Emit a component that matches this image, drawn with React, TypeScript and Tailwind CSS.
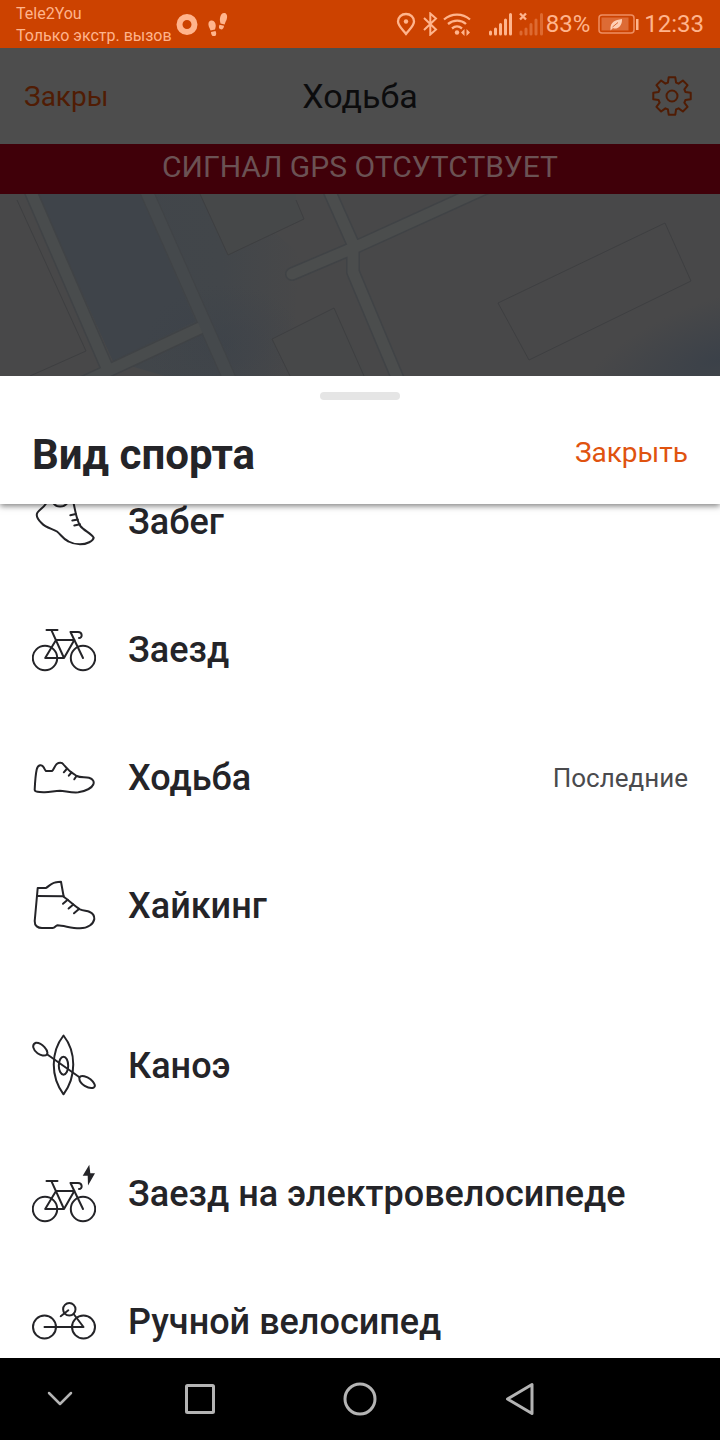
import React from "react";

const stroke = {
  fill: "none",
  stroke: "currentColor",
  strokeWidth: 2,
  strokeLinecap: "round" as const,
  strokeLinejoin: "round" as const,
};

const RunIcon = () => (
  <svg viewBox="0 0 64 64" className="w-16 h-16" {...stroke}>
    <path d="M16 8C16 15 9 18 5.500 22.500C3.500 25.500 6.500 30 9.500 33C14 38 20 38.500 25 41.500C29 44.500 31 49 36.500 51.500C41 54 44 54.300 48 54.300C55 54.300 61 51 61.700 47.700C59 43.500 52 40.500 48.300 36C44 29 43.500 21 41.300 12" />
    <path d="M20 10.500C23 18.500 33 18.500 37 10.500" />
    <path d="M38.300 25.300L43.800 24M40.300 30.500L45.800 29.500M42.300 35.500L48 34.300" />
  </svg>
);

const BikeParts = () => (
  <>
    <circle cx="13" cy="40" r="12.200" />
    <circle cx="51" cy="40" r="12.200" />
    <path d="M14.500 12H25.500M19.500 12.300L32 40M24 22H42.300M32 40H13.200L24 22M32 40L42.300 22" />
    <path d="M51 40L38.500 14H46C50.700 14 50.700 20 47 20" />
  </>
);

const BikeIcon = () => (
  <svg viewBox="0 0 64 64" className="w-16 h-16" {...stroke}>
    <BikeParts />
  </svg>
);

const WalkIcon = () => (
  <svg viewBox="0 0 64 64" className="w-16 h-16" {...stroke}>
    <path d="M2.700 43.500C3 37 3.500 29 4.700 23.500C6 18.500 10 18 11.800 21.500C12.700 23.300 13 24.500 14 25H20C21.500 24.500 22.500 20 24.700 18C27 16.300 30 16.300 31.500 18.500C35 23 39.500 27 44.700 30C48.500 32 53 30.700 57 31.700C61 33 62.500 35.500 61.300 38.500C59.500 42.500 53.500 45 46.300 46.300C39 47 33 44.800 28 44.700C22 44.800 17 46.800 11.300 46.300C7.500 46.200 2.500 46 2.700 43.500Z" />
    <path d="M34.700 23L31.800 26.300M39.500 26.500L36.800 29.700M44.500 30L42.300 33.300" />
  </svg>
);

const HikeIcon = () => (
  <svg viewBox="0 0 64 64" className="w-16 h-16" {...stroke}>
    <path d="M5.700 14H14C17 12 20 9 23 8.500C25 8 27 7.700 29 7.700L31.700 22.700C37 26.500 42.500 32 48 35.300C51.500 37 55 36.500 57.800 38C61 39.500 62.500 42 62.300 45C61.500 50 56 54.300 48 54.300C40 54.500 32 51.500 25.500 51.300C23.500 51.500 23.300 53.700 20.500 54H10C6 54 2.500 52 2.700 47Z" />
    <path d="M5 22L31.700 22.300M35.700 25.700L31 29.800M41.300 30.500L36.600 34.500M46.700 35.300L42 39.300" />
  </svg>
);

const CanoeIcon = () => (
  <svg viewBox="0 0 64 64" className="w-16 h-16" {...stroke}>
    <path d="M31.500 1.500C44.500 18 44.500 43 31.500 60.300C18.500 43 18.500 18 31.500 1.500Z" />
    <ellipse cx="31.500" cy="31.700" rx="4.700" ry="9" />
    <path d="M15 20.300L47.500 43.200" />
    <path d="M15 20.300C17 17 10 8.500 4 8.800C-1 10.500 1.500 16.500 5.500 19.300C8.500 21.500 13 22.500 15 20.300Z" />
    <path d="M47.500 43.200C49 40.500 55 42.500 58.500 45.300C61 47.500 64.500 51.500 62 53.300C58 56 46 50 47.500 43.200Z" />
  </svg>
);

const EBikeIcon = () => (
  <svg viewBox="0 0 64 64" className="w-16 h-16" {...stroke}>
    <g transform="translate(0 7)">
      <BikeParts />
    </g>
    <path
      d="M57.300 2.700L50.700 13.700H55.700L56 23.500L63 11.300H58.300Z"
      fill="currentColor"
      stroke="none"
    />
  </svg>
);

const HandBikeIcon = () => (
  <svg viewBox="0 0 64 64" className="w-16 h-16" {...stroke}>
    <circle cx="12.500" cy="37" r="11.500" />
    <circle cx="51.500" cy="37" r="11.500" />
    <circle cx="37.300" cy="19.300" r="6.200" />
    <path d="M12.500 37H51.500L42 24.500M28.700 26.200L36.300 20.300" />
  </svg>
);

// eight teeth, four points each
const gearPoints = Array.from({ length: 8 }, (_, i) =>
  [
    [-17, 14],
    [-10, 19],
    [10, 19],
    [17, 14],
  ]
    .map(([deg, r]) => {
      const a = ((i * 45 + deg) * Math.PI) / 180;
      return `${(20 + r * Math.sin(a)).toFixed(2)},${(20 - r * Math.cos(a)).toFixed(2)}`;
    })
    .join(" ")
).join(" ");

const sports = [
  { name: "Забег", icon: RunIcon },
  { name: "Заезд", icon: BikeIcon },
  { name: "Ходьба", icon: WalkIcon, note: "Последние" },
  { name: "Хайкинг", icon: HikeIcon },
];

const moreSports = [
  { name: "Каноэ", icon: CanoeIcon },
  { name: "Заезд на электровелосипеде", icon: EBikeIcon },
  { name: "Ручной велосипед", icon: HandBikeIcon },
];

const SportRow = ({
  name,
  icon: Icon,
  note,
}: {
  name: string;
  icon: React.ComponentType;
  note?: string;
}) => (
  <li>
    <button className="w-full h-32 px-8 flex items-center gap-8 text-left">
      <Icon />
      <span className="flex-1 text-4xl leading-none font-medium">{name}</span>
      {note && <span className="text-[26px] text-[#4a4a4d]">{note}</span>}
    </button>
  </li>
);

const StatusBar = () => (
  <div className="h-12 shrink-0 px-4 flex items-center justify-between bg-[#cc4200] text-[#ffb48c]">
    <div className="flex items-center gap-1">
      <div className="text-base leading-[22px] pt-0.5">
        <div>Tele2You</div>
        <div>Только экстр. вызов</div>
      </div>
      <svg viewBox="0 0 54 24" className="w-[54px] h-6" fill="currentColor">
        <circle cx="11" cy="12.500" r="7.500" fill="none" stroke="currentColor" strokeWidth="6" />
        <path d="M32.500 13C32 9.500 34 8 36 8.500C39 9 40.300 12 39.500 15.500L39 17.500L34.500 18.500C34 16.500 32.700 15 32.500 13ZM35 20L39.500 19C41 22 40 24 38.300 24.500C36.300 24.700 35 22.500 35 20Z" />
        <path d="M44 6C44.500 2.500 46.500 0.500 48.700 1C51.300 1.500 51.700 5 50.500 8C49.500 10 49 11 48.700 12.500L44.500 11.500C44 9.500 43.700 8 44 6ZM43.500 12.700L48 13.700C48 16 46.500 17.800 44.700 17.300C42.800 16.800 42.500 15 43.500 12.700Z" />
      </svg>
    </div>
    <div className="flex items-center text-2xl">
      <svg viewBox="0 0 150 24" className="w-[150px] h-6" fill="none" stroke="currentColor" strokeWidth="2.300">
        <path d="M10 22C6 17 2 13.500 2 9.500C2 5 5.500 2 10 2C14.500 2 18 5 18 9.500C18 13.500 14 17 10 22Z" />
        <circle cx="10" cy="9.500" r="2.200" fill="currentColor" stroke="none" />
        <path d="M28 6L40 17.500L34.300 22.500V1.500L40 6.500L28 18" strokeWidth="2" />
        <path d="M48 7.500C55.500 1 66.500 1 74 7.500M52 12C57.500 7.500 65 7.500 70 12M56 16.500C59 14 63 14 66 16.500" />
        <circle cx="61" cy="20.500" r="2.200" fill="currentColor" stroke="none" />
        <path d="M68.500 17L65 20.500L68.500 24ZM70.500 17L74 20.500L70.500 24Z" fill="currentColor" stroke="none" />
        <path strokeWidth="3" strokeLinecap="round" d="M94.500 22V20M99.500 22V17M104.500 22V12.500M109.500 22V8M114.500 22V2.500" />
        <path d="M124 1.500L130 7.500M130 1.500L124 7.500" />
        <path strokeWidth="3" strokeLinecap="round" opacity=".35" d="M125 22V20M130 22V17M135 22V12.500M140 22V8M145.500 22V2.500" />
      </svg>
      <span>83%</span>
      <svg viewBox="0 0 42 20" className="w-[42px] h-5 ml-2 mr-1">
        <rect x="1" y="1" width="35" height="18" rx="3" fill="none" stroke="#ee8f62" strokeWidth="1.500" />
        <rect x="3.500" y="3.500" width="27" height="13" fill="#dd6b35" />
        <path d="M38 5H40.500V16H38Z" fill="currentColor" />
        <path d="M12.500 15.500C12 8 17 6 24 5C24.500 13 18 16 15 14L12.500 16.500Z" fill="#ffd0b5" />
        <path d="M14.500 13L20 8.500" stroke="#dd6b35" strokeWidth="1" />
      </svg>
      <span>12:33</span>
    </div>
  </div>
);

const MapView = () => (
  <svg
    viewBox="0 0 720 182"
    preserveAspectRatio="xMidYMid slice"
    className="block w-full h-[182px] shrink-0 bg-[#484849]"
    fill="none"
  >
    <defs>
      <radialGradient id="water">
        <stop offset="0" stopColor="#3b4149" />
        <stop offset="1" stopColor="#3b4149" stopOpacity="0" />
      </radialGradient>
      <linearGradient id="park" x1="0" x2="1" y1="0" y2="0">
        <stop offset="0" stopColor="#40454a" />
        <stop offset="0.700" stopColor="#42464a" />
        <stop offset="1" stopColor="#42464a" stopOpacity="0" />
      </linearGradient>
    </defs>
    <path d="M38 0H230L300 60L290 182H165L113 167Z" fill="url(#park)" />
    <path d="M38 0H140L195 127L113 167Z" fill="#3f444a" />
    <ellipse cx="225" cy="150" rx="80" ry="60" fill="url(#water)" opacity=".5" />
    <ellipse cx="720" cy="165" rx="150" ry="60" fill="url(#water)" transform="rotate(-20 720 165)" />
    <path d="M200 0L228 61L304 25L296 6V0Z" fill="#464849" />
    <path d="M272 145L334 114L368 182H290Z" fill="#474849" />
    <g stroke="#404346" strokeLinejoin="round" strokeLinecap="round">
      <path d="M30 -4L108 176M145 -6L230 186M80 190L200 134" strokeWidth="14" />
      <path d="M328 -6L353 50M292 80L358 52L490 -8M353 50V78L400 190" strokeWidth="14" />
    </g>
    <g stroke="#4b4d4d" strokeLinejoin="round" strokeLinecap="round">
      <path d="M30 -4L108 176M80 190L200 134" stroke="#494c4d" strokeWidth="11" />
      <path d="M145 -6L230 186" stroke="#45494c" strokeWidth="12" />
      <path d="M328 -6L353 50M292 80L358 52L490 -8M353 50V78L400 190" strokeWidth="11" />
    </g>
    <path
      d="M17 6L86 157L30 182M200 0L228 61L304 25L296 6M290 182L272 145L334 114L364 182M498 109L665 29L691 87L529 166Z"
      stroke="#3e3f41"
    />
  </svg>
);

const App = () => {
  return (
    <div className="h-screen flex flex-col overflow-hidden bg-white text-[#242428] font-['Roboto',sans-serif]">
      <StatusBar />

      {/* Recording screen, dimmed behind the sheet */}
      <header className="h-24 shrink-0 px-6 grid grid-cols-3 items-center bg-[#4d4d4d]">
        <button className="justify-self-start pt-0.5 text-[28px] text-[#501c04]">Закры</button>
        <h1 className="justify-self-center text-[34px] text-[#0c0c0d]">Ходьба</h1>
        <button aria-label="Настройки" className="justify-self-end mr-1 text-[#501c04]">
          <svg viewBox="0 0 40 40" className="w-10 h-10" {...stroke}>
            <polygon points={gearPoints} />
            <circle cx="20" cy="20" r="5.500" />
          </svg>
        </button>
      </header>
      <div className="h-[50px] shrink-0 pb-1 flex items-center justify-center bg-[#400009] text-[#6b5254] text-3xl">
        СИГНАЛ GPS ОТСУТСТВУЕТ
      </div>
      <MapView />

      {/* Sheet */}
      <section className="flex-1 min-h-0 flex flex-col overflow-hidden bg-white">
        <div className="relative z-10 h-32 shrink-0 pt-4 shadow-[0_2px_6px_rgba(0,0,0,0.5)] bg-white">
          <div className="w-20 h-2 mx-auto rounded-sm bg-[#e5e5e5]" />
          <div className="h-26 px-8 pt-1 flex items-center justify-between">
            <h2 className="text-[42px] font-bold">Вид спорта</h2>
            <button className="pb-0.5 text-[28px] text-[#e0530f]">Закрыть</button>
          </div>
        </div>
        <div className="flex-1 min-h-0 overflow-hidden">
          <ul className="-mt-[46px]">
            {sports.map((sport) => (
              <SportRow key={sport.name} {...sport} />
            ))}
          </ul>
          <ul className="mt-8">
            {moreSports.map((sport) => (
              <SportRow key={sport.name} {...sport} />
            ))}
          </ul>
        </div>
      </section>

      {/* System navigation */}
      <nav className="h-[82px] shrink-0 px-10 flex items-center gap-[100px] bg-black text-[#b4b4b4]">
        <button aria-label="Скрыть">
          <svg viewBox="0 0 40 40" className="w-10 h-10" {...stroke} strokeWidth={2.5}>
            <path d="M9 14L20 25L31 14" />
          </svg>
        </button>
        <div className="flex items-center gap-[120px]">
          <button aria-label="Недавние">
            <svg viewBox="0 0 40 40" className="w-10 h-10" {...stroke} strokeWidth={3}>
              <rect x="6.500" y="6.500" width="27" height="27" rx="1" />
            </svg>
          </button>
          <button aria-label="Домой">
            <svg viewBox="0 0 40 40" className="w-10 h-10" {...stroke} strokeWidth={3}>
              <circle cx="20" cy="20" r="15" />
            </svg>
          </button>
          <button aria-label="Назад">
            <svg viewBox="0 0 40 40" className="w-10 h-10" {...stroke} strokeWidth={3}>
              <path d="M32 5.500V34.500L7.500 20Z" />
            </svg>
          </button>
        </div>
      </nav>
    </div>
  );
};

export default App;
